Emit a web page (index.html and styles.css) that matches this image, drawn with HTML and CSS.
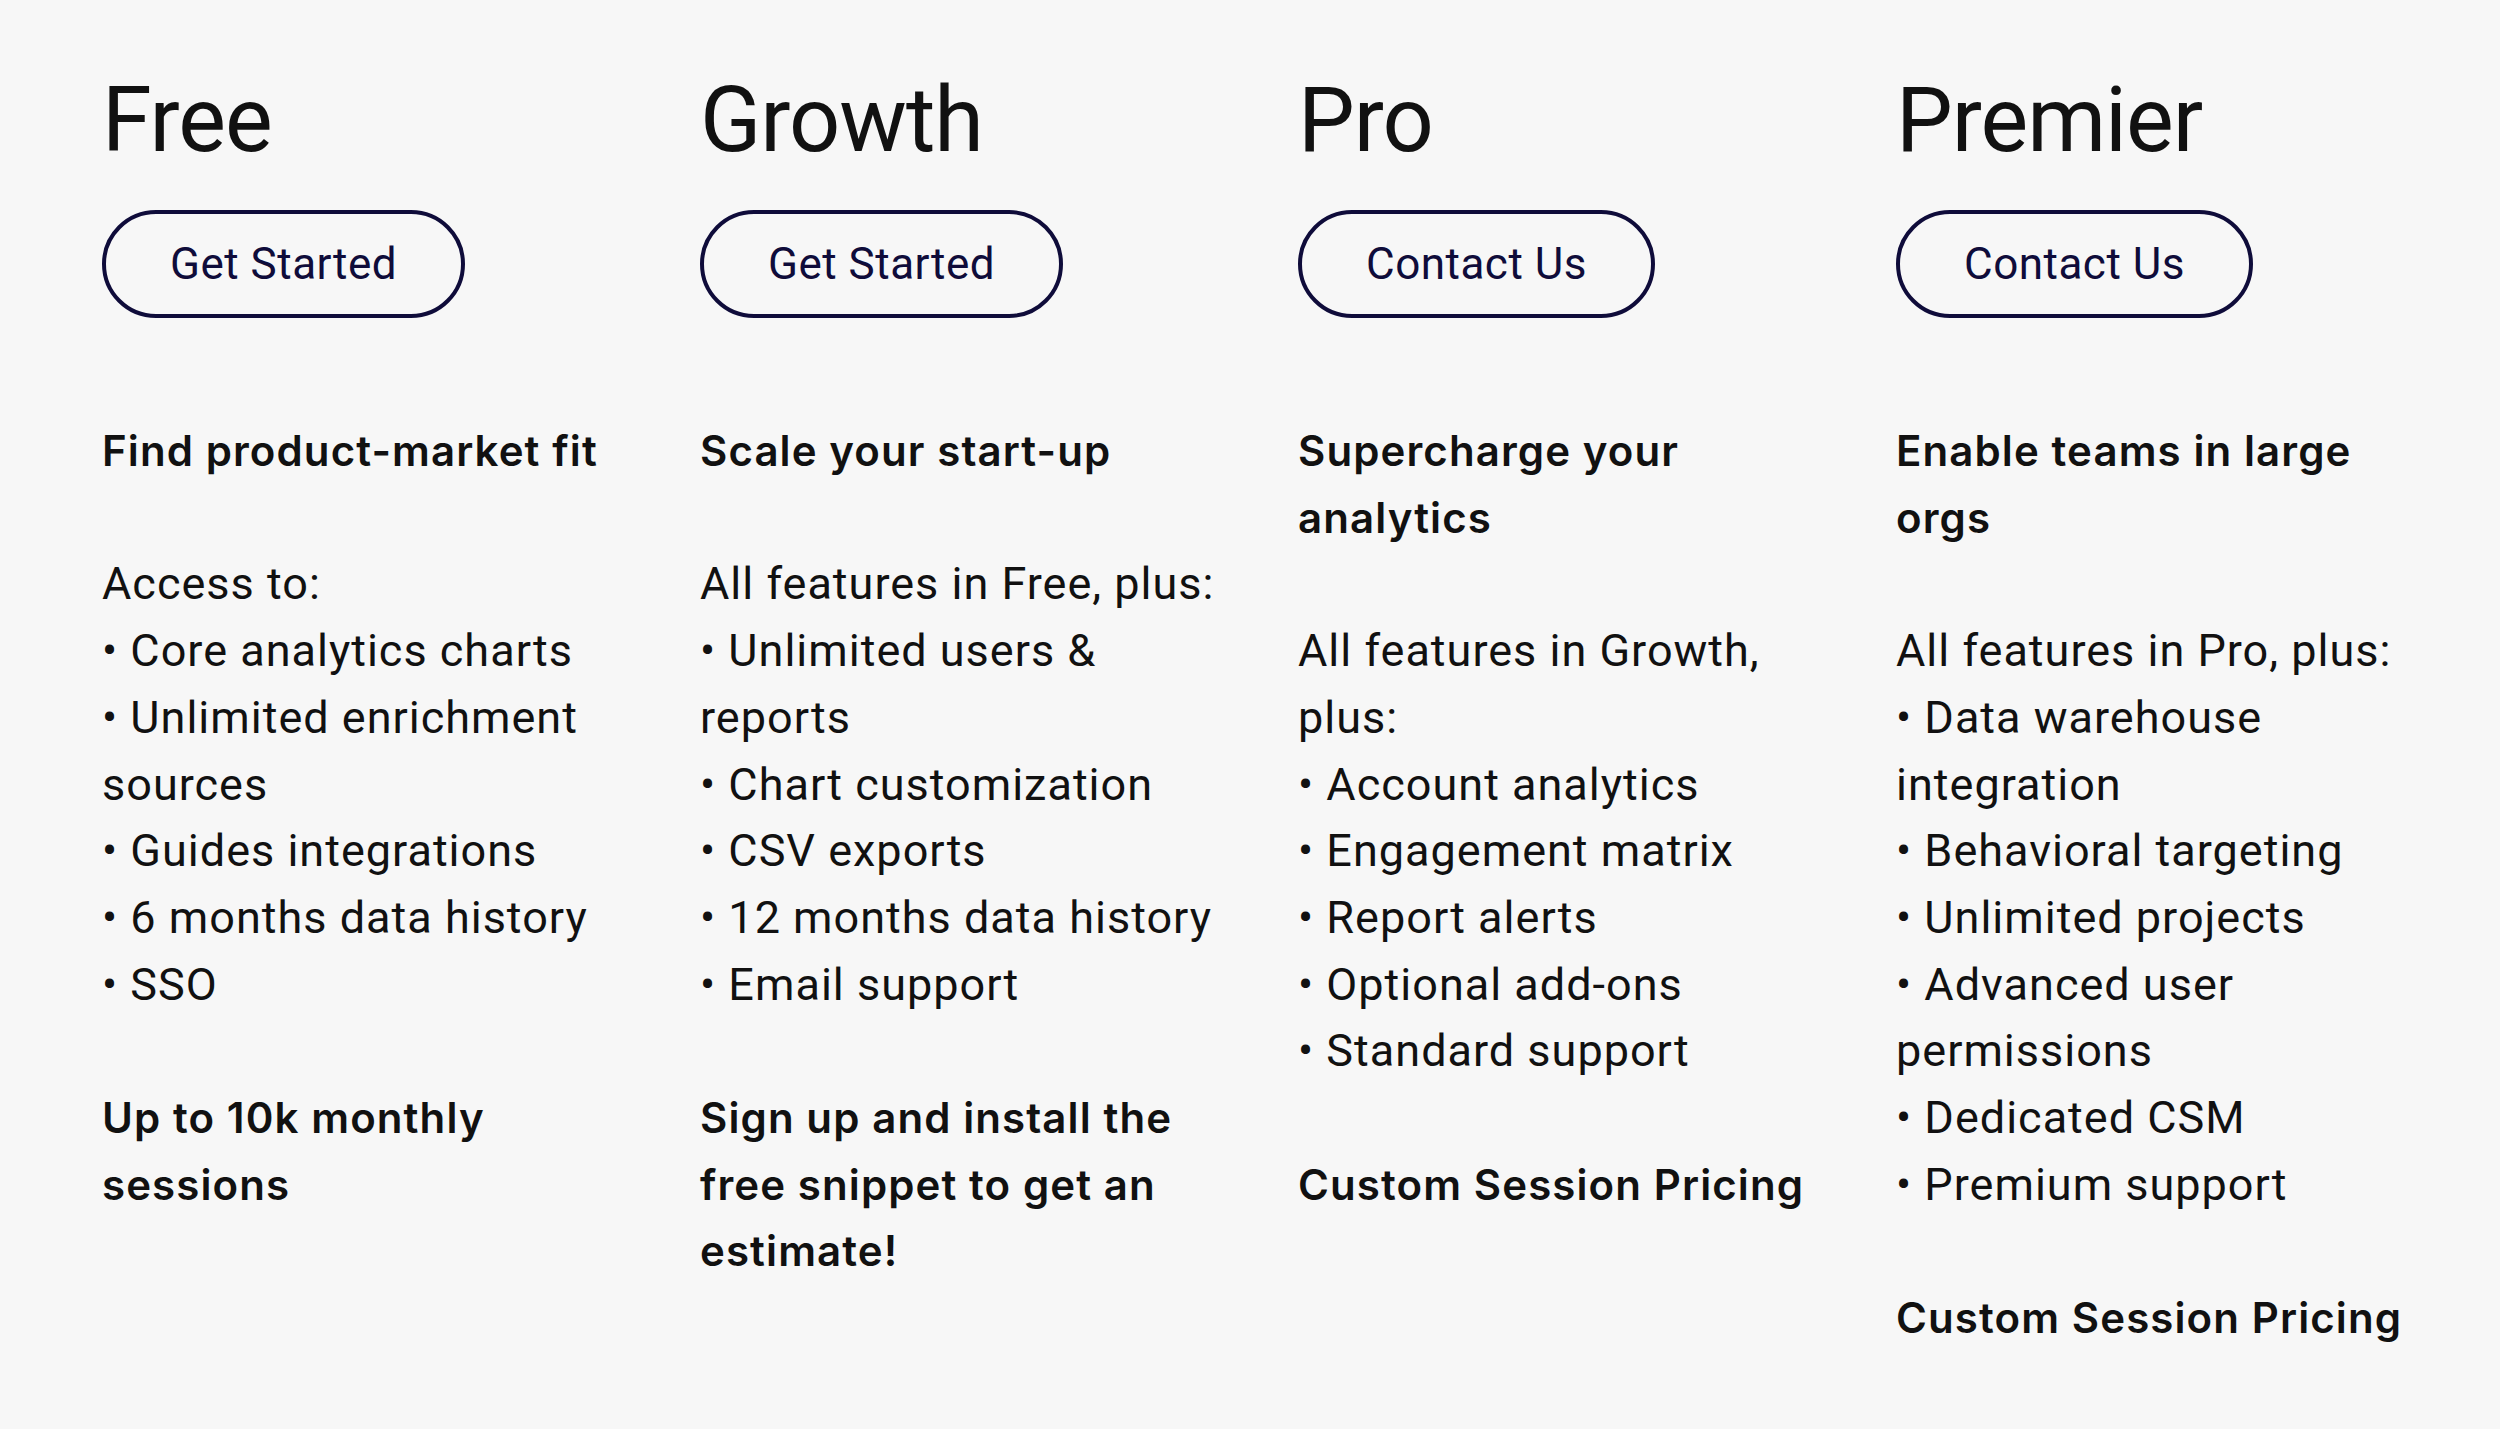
FILE: index.html
```html
<!DOCTYPE html>
<html lang="en">
<head>
<meta charset="utf-8">
<title>Pricing plans</title>
<link rel="stylesheet" href="styles.css">
</head>
<body>
<main class="plans">
  <section class="plan">
    <h2 class="plan-name">Free</h2>
    <a class="plan-btn" href="#">Get Started</a>
    <div class="plan-body">
      <p class="tagline">Find product-market fit</p>
      <p class="intro">Access to:</p>
      <ul class="features">
        <li>Core analytics charts</li>
        <li>Unlimited enrichment sources</li>
        <li>Guides integrations</li>
        <li>6 months data history</li>
        <li>SSO</li>
      </ul>
      <p class="note">Up to 10k monthly sessions</p>
    </div>
  </section>
  <section class="plan">
    <h2 class="plan-name">Growth</h2>
    <a class="plan-btn" href="#">Get Started</a>
    <div class="plan-body">
      <p class="tagline">Scale your start-up</p>
      <p class="intro">All features in Free, plus:</p>
      <ul class="features">
        <li>Unlimited users &amp; reports</li>
        <li>Chart customization</li>
        <li>CSV exports</li>
        <li>12 months data history</li>
        <li>Email support</li>
      </ul>
      <p class="note">Sign up and install the free snippet to get an estimate!</p>
    </div>
  </section>
  <section class="plan">
    <h2 class="plan-name">Pro</h2>
    <a class="plan-btn" href="#">Contact Us</a>
    <div class="plan-body">
      <p class="tagline">Supercharge your analytics</p>
      <p class="intro">All features in Growth, plus:</p>
      <ul class="features">
        <li>Account analytics</li>
        <li>Engagement matrix</li>
        <li>Report alerts</li>
        <li>Optional add-ons</li>
        <li>Standard support</li>
      </ul>
      <p class="note">Custom Session Pricing</p>
    </div>
  </section>
  <section class="plan">
    <h2 class="plan-name">Premier</h2>
    <a class="plan-btn" href="#">Contact Us</a>
    <div class="plan-body">
      <p class="tagline">Enable teams in large orgs</p>
      <p class="intro">All features in Pro, plus:</p>
      <ul class="features">
        <li>Data warehouse integration</li>
        <li>Behavioral targeting</li>
        <li>Unlimited projects</li>
        <li>Advanced user permissions</li>
        <li>Dedicated CSM</li>
        <li>Premium support</li>
      </ul>
      <p class="note">Custom Session Pricing</p>
    </div>
  </section>
</main>
</body>
</html>
```
FILE: styles.css
```css
html, body {
  margin: 0;
  padding: 0;
  background: #f7f7f7;
}

body {
  font-family: Roboto, "Liberation Sans", sans-serif;
  color: #111111;
  min-height: 1429px;
}

.plans {
  display: grid;
  grid-template-columns: repeat(4, 520px);
  column-gap: 78px;
  padding: 76px 0 0 102px;
}

.plan {
  display: flex;
  flex-direction: column;
  align-items: flex-start;
}

.plan-name {
  margin: 0;
  font-size: 90px;
  line-height: 90px;
  font-weight: 400;
  letter-spacing: -1px;
  color: #111111;
}

.plan-btn {
  margin-top: 44px;
  box-sizing: border-box;
  height: 108px;
  padding: 0 64px;
  display: inline-flex;
  align-items: center;
  border: 4px solid #0f0c3a;
  border-radius: 60px;
  color: #0f0c3a;
  text-decoration: none;
  font-size: 44px;
  font-weight: 400;
  letter-spacing: 0.5px;
}

.plan-body {
  margin-top: 100px;
  font-size: 45px;
  line-height: 66.7px;
  letter-spacing: 1px;
}

.plan-body p {
  margin: 0;
}

.tagline,
.note {
  font-family: Inter, Roboto, sans-serif;
  font-size: 42px;
  font-weight: 600;
  letter-spacing: 1.1px;
}

.tagline {
  margin-bottom: 66.7px !important;
}

.features {
  list-style: none;
  margin: 0 0 66.7px;
  padding: 0;
}

.features li::before {
  content: "\2022\00a0";
}
```
